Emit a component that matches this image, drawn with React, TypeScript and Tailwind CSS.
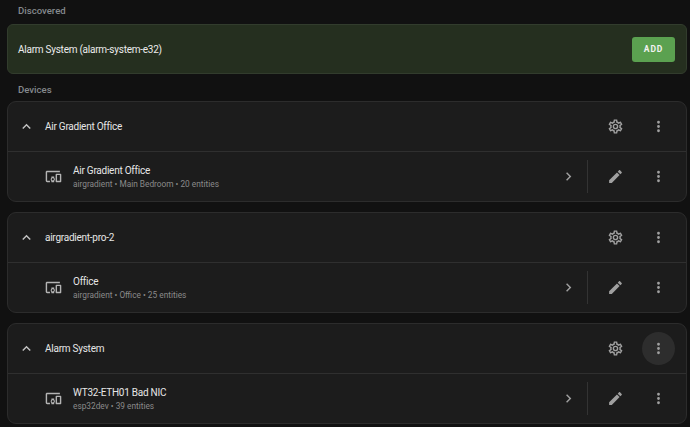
const mdiDevices =
  'M3 6H21V4H3C1.9 4 1 4.9 1 6V18C1 19.1 1.9 20 3 20H7V18H3V6M13 12H9V13.78C8.39 14.33 8 15.11 8 16C8 16.89 8.39 17.67 9 18.22V20H13V18.22C13.61 17.67 14 16.88 14 16S13.61 14.33 13 13.78V12M11 17.5C10.17 17.5 9.5 16.83 9.5 16S10.17 14.5 11 14.5 12.5 15.17 12.5 16 11.83 17.5 11 17.5M22 8H16C15.5 8 15 8.5 15 9V19C15 19.5 15.5 20 16 20H22C22.5 20 23 19.5 23 19V9C23 8.5 22.5 8 22 8M21 18H17V10H21V18Z';
const mdiCog =
  'M12,8A4,4 0 0,1 16,12A4,4 0 0,1 12,16A4,4 0 0,1 8,12A4,4 0 0,1 12,8M12,10A2,2 0 0,0 10,12A2,2 0 0,0 12,14A2,2 0 0,0 14,12A2,2 0 0,0 12,10M10,22C9.75,22 9.54,21.82 9.5,21.58L9.13,18.93C8.5,18.68 7.96,18.34 7.44,17.94L4.95,18.95C4.73,19.03 4.46,18.95 4.34,18.73L2.34,15.27C2.21,15.05 2.27,14.78 2.46,14.63L4.57,12.97L4.5,12L4.57,11L2.46,9.37C2.27,9.22 2.21,8.95 2.34,8.73L4.34,5.27C4.46,5.05 4.73,4.96 4.95,5.05L7.44,6.05C7.96,5.66 8.5,5.32 9.13,5.07L9.5,2.42C9.54,2.18 9.75,2 10,2H14C14.25,2 14.46,2.18 14.5,2.42L14.87,5.07C15.5,5.32 16.04,5.66 16.56,6.05L19.05,5.05C19.27,4.96 19.54,5.05 19.66,5.27L21.66,8.73C21.79,8.95 21.73,9.22 21.54,9.37L19.43,11L19.5,12L19.43,13L21.54,14.63C21.73,14.78 21.79,15.05 21.66,15.27L19.66,18.73C19.54,18.95 19.27,19.04 19.05,18.95L16.56,17.95C16.04,18.34 15.5,18.68 14.87,18.93L14.5,21.58C14.46,21.82 14.25,22 14,22H10M11.25,4L10.88,6.61C9.68,6.86 8.62,7.5 7.85,8.39L5.44,7.35L4.69,8.65L6.8,10.2C6.4,11.37 6.4,12.64 6.8,13.8L4.68,15.36L5.43,16.66L7.86,15.62C8.63,16.5 9.68,17.14 10.87,17.38L11.24,20H12.76L13.13,17.39C14.32,17.14 15.37,16.5 16.14,15.62L18.57,16.66L19.32,15.36L17.2,13.81C17.6,12.64 17.6,11.37 17.2,10.2L19.31,8.65L18.56,7.35L16.15,8.39C15.38,7.5 14.32,6.86 13.12,6.62L12.75,4H11.25Z';
const mdiPencil =
  'M20.71,7.04C21.1,6.65 21.1,6 20.71,5.63L18.37,3.29C18,2.9 17.35,2.9 16.96,3.29L15.12,5.12L18.87,8.87M3,17.25V21H6.75L17.81,9.93L14.06,6.18L3,17.25Z';
const mdiDots =
  'M12,16A2,2 0 0,1 14,18A2,2 0 0,1 12,20A2,2 0 0,1 10,18A2,2 0 0,1 12,16M12,10A2,2 0 0,1 14,12A2,2 0 0,1 12,14A2,2 0 0,1 10,12A2,2 0 0,1 12,10M12,4A2,2 0 0,1 14,6A2,2 0 0,1 12,8A2,2 0 0,1 10,6A2,2 0 0,1 12,4Z';
const mdiChevronUp = 'M7.41,15.41L12,10.83L16.59,15.41L18,14L12,8L6,14L7.41,15.41Z';
const mdiChevronRight = 'M8.59,16.58L13.17,12L8.59,7.41L10,6L16,12L10,18L8.59,16.58Z';

function Icon({ d, className }: { d: string; className: string }) {
  return (
    <svg viewBox="0 0 24 24" className={className} fill="currentColor">
      <path d={d} />
    </svg>
  );
}

function IconBox({ d, hovered }: { d: string; hovered?: boolean }) {
  return (
    <div
      className={
        hovered
          ? 'flex h-[33px] w-[33px] items-center justify-center rounded-full bg-[#2d2d2d]'
          : 'flex h-[33px] w-[33px] items-center justify-center rounded-full'
      }
    >
      <Icon d={d} className="h-[17px] w-[17px] text-[#a0a0a0]" />
    </div>
  );
}

interface Device {
  group: string;
  name: string;
  meta: string;
  hovered?: boolean;
}

const devices: Device[] = [
  { group: 'Air Gradient Office', name: 'Air Gradient Office', meta: 'airgradient • Main Bedroom • 20 entities' },
  { group: 'airgradient-pro-2', name: 'Office', meta: 'airgradient • Office • 25 entities' },
  { group: 'Alarm System', name: 'WT32-ETH01 Bad NIC', meta: 'esp32dev • 39 entities', hovered: true },
];

function DeviceCard({ device }: { device: Device }) {
  return (
    <div className="ml-[7px] mr-[3px] h-[101px] rounded-[9px] border border-[#2c2c2c] bg-[#1c1c1c]">
      {/* Group header */}
      <div className="flex h-[50px] items-center border-b border-[#2f2f2f] pl-[10px] pr-[11px]">
        <Icon d={mdiChevronUp} className="h-[17px] w-[17px] text-[#c4c4c4]" />
        <span className="ml-[10px] flex-1 text-[10px] tracking-[-0.25px] text-[#e6e6e6]">{device.group}</span>
        <IconBox d={mdiCog} />
        <div className="ml-[10px]">
          <IconBox d={mdiDots} hovered={device.hovered} />
        </div>
      </div>
      {/* Device row */}
      <div className="flex h-[49px] items-center pl-[37px] pr-[11px]">
        <Icon d={mdiDevices} className="h-[17px] w-[17px] text-[#b4b4b4]" />
        <div className="ml-[11px] flex-1">
          <div className="text-[10px] leading-[13px] tracking-[-0.25px] text-[#e6e6e6]">{device.name}</div>
          <div className="mt-[1px] text-[8.3px] leading-[12px] text-[#8a8a8a]">{device.meta}</div>
        </div>
        <Icon d={mdiChevronRight} className="h-[17px] w-[17px] text-[#a0a0a0]" />
        <div className="ml-[10px] h-[33px] w-px bg-[#333333]" />
        <div className="ml-[11px]">
          <IconBox d={mdiPencil} />
        </div>
        <div className="ml-[10px]">
          <IconBox d={mdiDots} />
        </div>
      </div>
    </div>
  );
}

export default function App() {
  return (
    <div className="h-[427px] w-[690px] overflow-hidden bg-[#111111] font-['Roboto',sans-serif]">
      <div className="flex h-[24px] items-center pb-[1px] pl-[18px] text-[9.6px] font-medium text-[#858a8e]">
        Discovered
      </div>
      <div className="ml-[7px] mr-[3px] flex h-[50px] items-center justify-between rounded-[6px] border border-[#323c2d] bg-[#252f1f] pl-[10px] pr-[11px]">
        <span className="text-[10px] tracking-[-0.25px] text-[#ececec]">Alarm System (alarm-system-e32)</span>
        <button className="flex h-[25px] w-[43px] items-center justify-center rounded-[3px] bg-[#5ba150] text-[8.5px] font-bold tracking-[0.9px] text-[#f2f2f2]">
          ADD
        </button>
      </div>
      <div className="flex h-[27px] items-center pl-[18px] pt-[5px] text-[9.6px] font-medium text-[#858a8e]">
        Devices
      </div>
      <div className="flex flex-col gap-[10px]">
        {devices.map((device) => (
          <DeviceCard key={device.group} device={device} />
        ))}
      </div>
    </div>
  );
}
